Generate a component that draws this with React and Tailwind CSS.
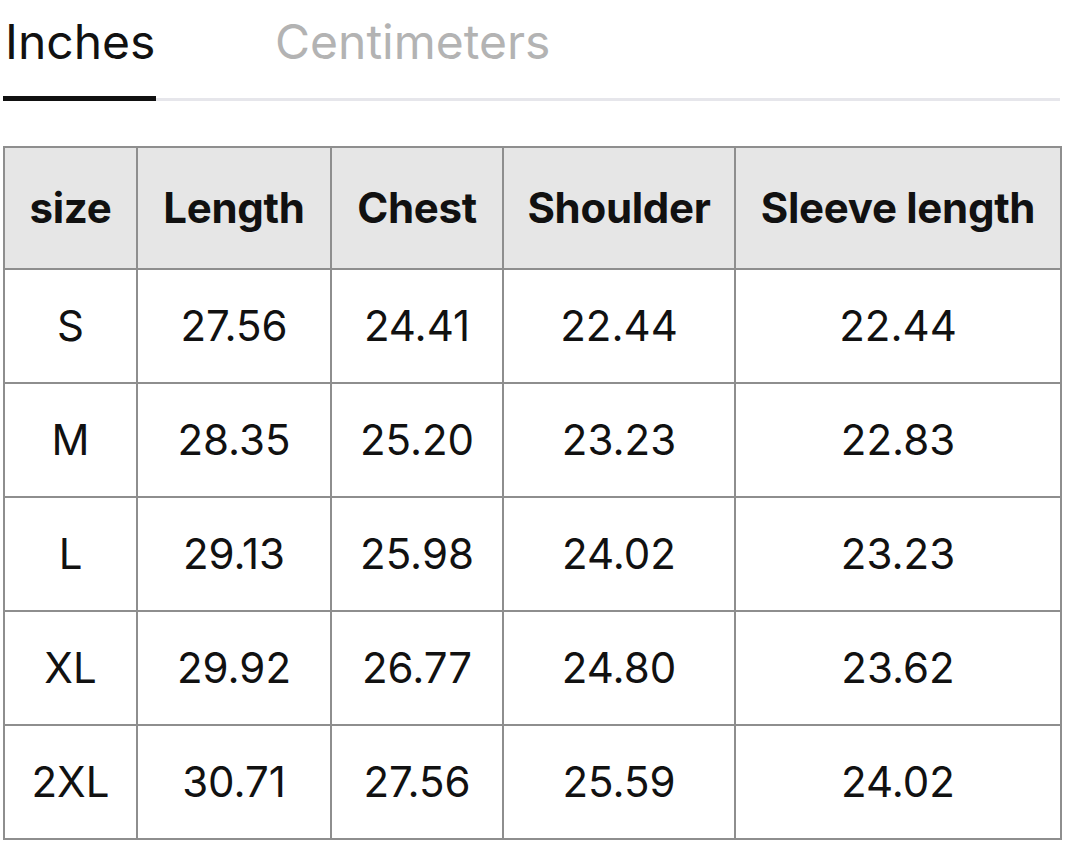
import React, { useState } from "react";

const ROWS = [
  ["S", "27.56", "24.41", "22.44", "22.44"],
  ["M", "28.35", "25.20", "23.23", "22.83"],
  ["L", "29.13", "25.98", "24.02", "23.23"],
  ["XL", "29.92", "26.77", "24.80", "23.62"],
  ["2XL", "30.71", "27.56", "25.59", "24.02"],
];

const HEADERS = ["size", "Length", "Chest", "Shoulder", "Sleeve length"];
const WIDTHS = ["w-[133px]", "w-[194px]", "w-[172px]", "w-[232px]", "w-[326px]"];

export default function App() {
  const [unit, setUnit] = useState("in");

  return (
    <div className="min-h-screen w-full bg-white text-[#111111] font-['Inter','Liberation_Sans',sans-serif]">
      <div className="ml-[3px] flex w-[1057px] border-b-[3px] border-[#e6e6eb]">
        <button
          onClick={() => setUnit("in")}
          className={
            "-mb-[3px] w-[153px] pl-[2px] pt-[18px] pb-[30px] text-left text-[48px] leading-none border-b-[5px] " +
            (unit === "in" ? "border-[#111111] text-[#111111]" : "border-transparent text-[#b3b3b3]")
          }
        >
          Inches
        </button>
        <button
          onClick={() => setUnit("cm")}
          className={
            "-mb-[3px] ml-[119px] pt-[18px] pb-[30px] text-left text-[48px] leading-none border-b-[5px] " +
            (unit === "cm" ? "border-[#111111] text-[#111111]" : "border-transparent text-[#b3b3b3]")
          }
        >
          Centimeters
        </button>
      </div>

      <table className="mt-[45px] ml-[3px] w-[1057px] table-fixed border-collapse border-2 border-[#8e8e8e]">
        <colgroup>
          {WIDTHS.map((w, i) => (
            <col key={i} className={w} />
          ))}
        </colgroup>
        <thead>
          <tr className="h-[122px] bg-[#e6e6e6]">
            {HEADERS.map((h) => (
              <th key={h} className="border-2 border-[#8e8e8e] text-center text-[42px] font-bold leading-none tracking-[-0.3px]">
                {h}
              </th>
            ))}
          </tr>
        </thead>
        <tbody>
          {ROWS.map((row) => (
            <tr key={row[0]} className="h-[114px]">
              {row.map((v, i) => (
                <td key={i} className="border-2 border-[#8e8e8e] text-center text-[42px] leading-none">
                  {v}
                </td>
              ))}
            </tr>
          ))}
        </tbody>
      </table>
    </div>
  );
}
